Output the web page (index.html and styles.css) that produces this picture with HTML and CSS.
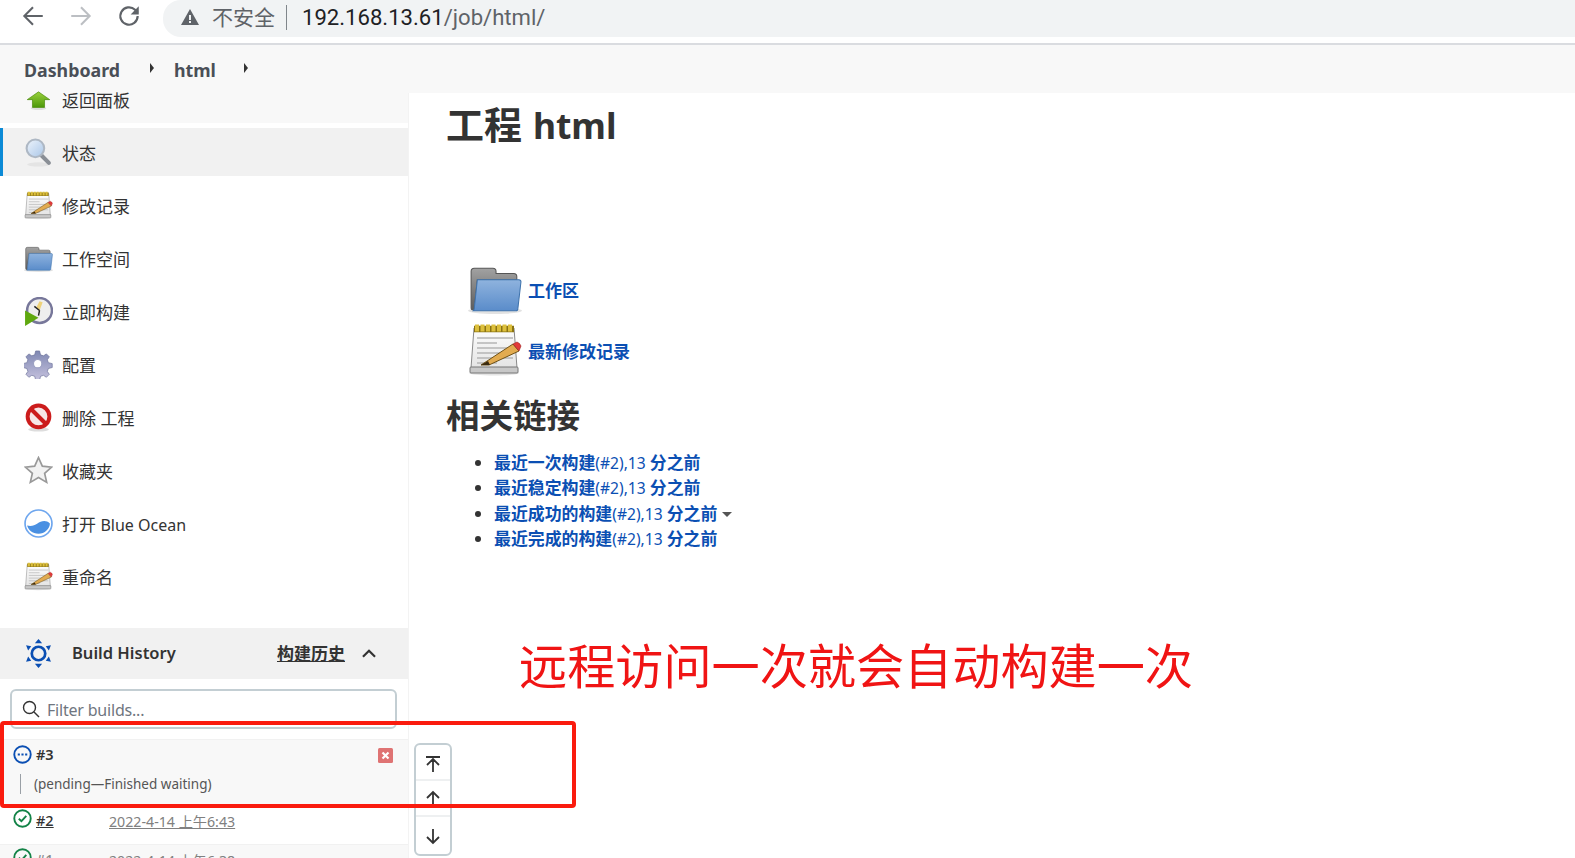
FILE: index.html
```html
<!DOCTYPE html>
<html lang="zh-CN">
<head>
  <meta charset="UTF-8" />
  <title>html [Jenkins]</title>
  <link rel="stylesheet" href="styles.css">
</head>
<body>
  <svg class="defs" width="0" height="0">
    <defs>
      <linearGradient id="folderBlue" x1="0" y1="0" x2="0" y2="1">
        <stop offset="0" stop-color="#8fb3de"/>
        <stop offset="1" stop-color="#5a8cca"/>
      </linearGradient>
      <linearGradient id="folderGrey" x1="0" y1="0" x2="0" y2="1">
        <stop offset="0" stop-color="#a2a2a2"/>
        <stop offset="1" stop-color="#5c5c5c"/>
      </linearGradient>
      <linearGradient id="paper" x1="0" y1="0" x2="0" y2="1">
        <stop offset="0" stop-color="#fdfdfd"/>
        <stop offset="1" stop-color="#e4e4e4"/>
      </linearGradient>
      <linearGradient id="gearFill" x1="0" y1="0" x2="0" y2="1">
        <stop offset="0" stop-color="#7f88b2"/>
        <stop offset="1" stop-color="#c6c2de"/>
      </linearGradient>
      <linearGradient id="lens" x1="0" y1="0" x2="1" y2="1">
        <stop offset="0" stop-color="#eef4fb"/>
        <stop offset="1" stop-color="#a9c6e8"/>
      </linearGradient>
      <linearGradient id="arrowGreen" x1="0" y1="0" x2="0" y2="1">
        <stop offset="0" stop-color="#9ad13c"/>
        <stop offset="1" stop-color="#4c980a"/>
      </linearGradient>
      <symbol id="i-folder" viewBox="0 0 52 50">
        <ellipse cx="26" cy="46" rx="26" ry="3" fill="#e2e2e2"/>
        <path d="M3 8q0-3 3-3h18q3 0 3 3v2h17q3 0 3 3v3H9L6 45H5q-2 0-2-2z" fill="url(#folderGrey)" stroke="#555"/>
        <path d="M9 16h40q2 0 2 2l-3 26q0 2-2 2H5q1-1 1-2z" fill="url(#folderBlue)" stroke="#3f73ad"/>
      </symbol>
      <symbol id="i-notepad" viewBox="0 0 54 52">
        <ellipse cx="26" cy="49" rx="25" ry="2.500" fill="#e4e4e4"/>
        <path d="M3 44l3-40h40l3 40z" fill="url(#paper)" stroke="#8a8a8a"/>
        <rect x="2" y="43" width="48" height="6" rx="1" fill="#c8c8c8" stroke="#777"/>
        <path d="M6 5h40" stroke="#8a7313" stroke-width="6.500"/>
        <path d="M7 4h38" stroke="#dcbf3c" stroke-width="7" stroke-dasharray="4 1.500"/>
        <path d="M9 14h36M9 19h20M9 24h36M9 29h26M9 34h36M9 39h20" stroke="#b5b5b5" stroke-width="1.300"/>
        <path d="M13 41l32-21 6 7-30 14z" fill="#e2ab50" stroke="#6f5218"/>
        <path d="M45 20l4-2q3 1 4 4l-2 5z" fill="#e23a3a" stroke="#9c2020" stroke-width=".6"/>
        <path d="M13 41l7-4 2 4z" fill="#3a2a10"/>
      </symbol>
      <symbol id="i-status-ok" viewBox="0 0 18 18">
        <circle cx="9" cy="9" r="7.800" fill="none" stroke="#138347" stroke-width="1.800"/>
        <path d="M5.500 9.200l2.500 2.400 4.600-5" fill="none" stroke="#138347" stroke-width="1.800"/>
      </symbol>
    </defs>
  </svg>

  <header class="chrome">
    <svg class="nav-icon" viewBox="0 0 24 24"><path d="M21 12H4M12 4l-8 8 8 8" fill="none" stroke="#5f6368" stroke-width="1.900"/></svg>
    <svg class="nav-icon" viewBox="0 0 24 24"><path d="M3 12h17M12 4l8 8-8 8" fill="none" stroke="#bcbfc3" stroke-width="1.900"/></svg>
    <svg class="nav-icon" viewBox="0 0 24 24"><path d="M20 12a8 8 0 1 1-2.400-5.700L20 9" fill="none" stroke="#5f6368" stroke-width="2"/><path d="M21 3v7.500h-7.500z" fill="#5f6368"/></svg>
    <div class="omnibox">
      <svg class="warn" viewBox="0 0 20 20"><path d="M10 2l9 16H1z" fill="#5f6368"/><path d="M9 8h2v5H9zM9 14h2v2H9z" fill="#f1f3f4"/></svg>
      <span class="insecure">不安全</span>
      <span class="url"><b>192.168.13.61</b>/job/html/</span>
    </div>
  </header>

  <nav class="breadcrumbs">
    <a class="crumb">Dashboard</a><span class="crumb-arrow"></span>
    <a class="crumb">html</a><span class="crumb-arrow"></span>
  </nav>

  <div class="layout">
    <aside class="sidebar">
      <a class="task task-back">
        <svg class="task-icon" viewBox="0 0 28 22"><ellipse cx="14" cy="20" rx="9" ry="2" fill="#ddd"/><path d="M14 1l13 9h-6v9H7v-9H1z" fill="url(#arrowGreen)" stroke="#4b8a0a" stroke-width=".8"/></svg>
        返回面板
      </a>
      <a class="task task-active">
        <svg class="task-icon" viewBox="0 0 28 28"><ellipse cx="14" cy="25.500" rx="11" ry="2" fill="#e4e4e4"/><path d="M16 16l8 8" stroke="#8a8f96" stroke-width="4" stroke-linecap="round"/><circle cx="11" cy="10" r="8.500" fill="url(#lens)" stroke="#aeb8c4" stroke-width="2"/></svg>
        状态
      </a>
      <a class="task"><svg class="task-icon"><use href="#i-notepad"/></svg>修改记录</a>
      <a class="task"><svg class="task-icon"><use href="#i-folder"/></svg>工作空间</a>
      <a class="task">
        <svg class="task-icon" viewBox="0 0 28 28"><circle cx="15" cy="13" r="12" fill="#eee" stroke="#77779a" stroke-width="2.400"/><path d="M15 4l-3 6 3 3 3-8z" fill="#eed27a"/><path d="M15 13l-5-4M15 13l-1 5" stroke="#222" stroke-width="1.400"/><path d="M1 13l13 7L1 28z" fill="#5fa80f"/></svg>
        立即构建
      </a>
      <a class="task">
        <svg class="task-icon" viewBox="0 0 28 28"><path d="M12 1h4l1 4 3 1 3-2 3 3-2 3 1 3 4 1v4l-4 1-1 3 2 3-3 3-3-2-3 1-1 4h-4l-1-4-3-1-3 2-3-3 2-3-1-3-4-1v-4l4-1 1-3-2-3 3-3 3 2 3-1z" transform="scale(.94)" fill="url(#gearFill)" stroke="#6c7299" stroke-width=".7"/><circle cx="13.200" cy="13.200" r="4" fill="#fff" stroke="#9a9fc0"/></svg>
        配置
      </a>
      <a class="task">
        <svg class="task-icon" viewBox="0 0 28 28"><ellipse cx="14" cy="25.500" rx="10" ry="2" fill="#ddd"/><circle cx="14" cy="13" r="10.500" fill="#f7e6e6" stroke="#cc1c1c" stroke-width="3.800"/><path d="M7 6l14 14" stroke="#cc1c1c" stroke-width="4"/></svg>
        删除 工程
      </a>
      <a class="task">
        <svg class="task-icon" viewBox="0 0 28 28"><path d="M14 1.500l3.700 8.300 9 .9-6.800 6 2 8.800L14 20.800 6.100 25.500l2-8.800-6.800-6 9-.9z" fill="#f2f2f2" stroke="#999" stroke-width="1.600"/></svg>
        收藏夹
      </a>
      <a class="task">
        <svg class="task-icon" viewBox="0 0 28 28"><circle cx="14" cy="14" r="13" fill="#fff" stroke="#6ea6ee" stroke-width="1.600"/><path d="M3 16c4 1 7 0 10-2s8-4 12 0c0 5-5 10-11 10S4 20 3 16z" fill="#4a90e2"/></svg>
        <span>打开 <span class="latin">Blue Ocean</span></span>
      </a>
      <a class="task"><svg class="task-icon"><use href="#i-notepad"/></svg>重命名</a>

      <section class="history">
        <div class="history-head">
          <svg class="history-icon" viewBox="0 0 28 28"><circle cx="14" cy="14" r="6.500" fill="none" stroke="#0b4fb3" stroke-width="2.600"/><path d="M14 0l3.500 4h-7zM14 28l-3.500-4h7zM2 6l5 1-3 4zM26 6l-5 1 3 4zM2 22l5-1-3-4zM26 22l-5-1 3-4z" fill="#0b4fb3"/></svg>
          <span class="history-title">Build History</span>
          <a class="history-link">构建历史</a>
          <svg class="chevron" viewBox="0 0 14 10"><path d="M1.500 8L7 2.500 12.500 8" fill="none" stroke="#333" stroke-width="2"/></svg>
        </div>
        <div class="filter-wrap">
          <div class="filter">
            <svg class="filter-icon" viewBox="0 0 18 18"><circle cx="7.500" cy="7.500" r="6" fill="none" stroke="#333" stroke-width="1.400"/><path d="M12 12l5 5" stroke="#333" stroke-width="1.400"/></svg>
            <span class="filter-text">Filter builds...</span>
          </div>
        </div>
        <div class="build build-pending">
          <div class="build-top">
            <svg class="status" viewBox="0 0 18 18"><circle cx="9" cy="9" r="7.800" fill="none" stroke="#0b4fb3" stroke-width="1.800"/><path d="M4.500 9h2M8 9h2M11.500 9h2" stroke="#0b4fb3" stroke-width="2"/></svg>
            <b class="build-no">#3</b>
            <svg class="cancel" viewBox="0 0 15 15"><rect width="15" height="15" rx="1.500" fill="#df7373"/><path d="M4.500 4.500l6 6M10.500 4.500l-6 6" stroke="#fff" stroke-width="2.200"/></svg>
          </div>
          <div class="build-note">(pending—Finished waiting)</div>
        </div>
        <div class="build build-row">
          <svg class="status"><use href="#i-status-ok"/></svg>
          <a class="build-no link">#2</a>
          <a class="build-date">2022-4-14 上午6:43</a>
        </div>
        <div class="build build-row build-alt">
          <svg class="status"><use href="#i-status-ok"/></svg>
          <a class="build-no link muted">#1</a>
          <a class="build-date">2022-4-14 上午6:38</a>
        </div>
      </section>
    </aside>

    <main class="content">
      <h1>工程 <span class="h1-latin">html</span></h1>
      <div class="big-links">
        <a class="big-link"><svg class="big-icon"><use href="#i-folder"/></svg>工作区</a>
        <a class="big-link"><svg class="big-icon"><use href="#i-notepad"/></svg>最新修改记录</a>
      </div>
      <h2>相关链接</h2>
      <ul class="permalinks">
        <li><a><b>最近一次构建</b>(#2),13 <b>分之前</b></a></li>
        <li><a><b>最近稳定构建</b>(#2),13 <b>分之前</b></a></li>
        <li><a><b>最近成功的构建</b>(#2),13 <b>分之前</b></a><span class="caret"></span></li>
        <li><a><b>最近完成的构建</b>(#2),13 <b>分之前</b></a></li>
      </ul>
    </main>
  </div>

  <div class="scroll-widget">
    <div class="scroll-btn"><svg viewBox="0 0 18 18"><path d="M2 2h14M9 17V5M3 10l6-6 6 6" fill="none" stroke="#333" stroke-width="1.800"/></svg></div>
    <div class="scroll-btn"><svg viewBox="0 0 18 18"><path d="M9 17V3M3 9l6-6 6 6" fill="none" stroke="#333" stroke-width="1.800"/></svg></div>
    <div class="scroll-btn"><svg viewBox="0 0 18 18"><path d="M9 1v14M3 9l6 6 6-6" fill="none" stroke="#333" stroke-width="1.800"/></svg></div>
  </div>

  <div class="note-text">远程访问一次就会自动构建一次</div>
  <div class="note-box"></div>
</body>
</html>
```

FILE: styles.css
```css
* {
  box-sizing: border-box;
}

html, body {
  height: 858px;
  overflow: hidden;
}

body {
  margin: 0;
  position: relative;
  background: #fff;
  color: #333;
  font-family: "Noto Sans", "Noto Sans CJK SC", sans-serif;
  font-size: 17px;
}

.defs {
  position: absolute;
}

/* browser bar */
.chrome {
  height: 45px;
  border-bottom: 2px solid #dadce0;
  display: flex;
  align-items: flex-start;
  padding-left: 20px;
}

.nav-icon {
  width: 26px;
  height: 26px;
  margin: 3px 22px 0 0;
}

.omnibox {
  flex: 1;
  height: 37px;
  margin-left: -1px;
  padding: 0 0 3px 17px;
  background: #f1f3f4;
  border-radius: 18px 0 0 18px;
  display: flex;
  align-items: center;
}

.warn {
  width: 20px;
  height: 20px;
}

.insecure {
  margin-left: 12px;
  padding-right: 11px;
  border-right: 1px solid #80868b;
  color: #5f6368;
  font-size: 21px;
  line-height: 25px;
}

.url {
  margin-left: 15px;
  font-family: Roboto, sans-serif;
  font-size: 22.100px;
  color: #5f6368;
}

.url b {
  font-weight: 400;
  color: #202124;
}

/* breadcrumbs */
.breadcrumbs {
  height: 48px;
  background: #f8f8f8;
  display: flex;
  align-items: center;
  padding: 2px 0 0 24px;
}

.crumb {
  font-size: 17.800px;
  font-weight: 700;
  color: #4a4f57;
}

.crumb-arrow {
  width: 0;
  height: 0;
  margin: -5px 20px 0 30px;
  border-left: 4px solid #333;
  border-top: 5px solid transparent;
  border-bottom: 5px solid transparent;
}

.crumb-arrow:last-child {
  margin-left: 28px;
}

.layout {
  display: flex;
}

/* sidebar */
.sidebar {
  width: 409px;
  height: 765px;
  border-right: 1px solid #f3f3f3;
  flex: none;
}

.task {
  height: 48px;
  margin-bottom: 5px;
  padding-left: 24px;
  display: flex;
  align-items: center;
  color: #333;
  white-space: nowrap;
}

.latin {
  font-size: 16px;
}

.task-back {
  height: 30px;
  background: #f8f8f8;
  align-items: flex-start;
  line-height: 16px;
}

.task-active {
  background: #f1f1f1;
  border-left: 3px solid #0b8ad6;
  padding-left: 21px;
}

.task-icon {
  width: 29px;
  height: 29px;
  margin-right: 9px;
  flex: none;
}

.task-back .task-icon {
  height: 19px;
  margin-top: -2px;
}

.history {
  margin-top: 28px;
}

.history-head {
  height: 51px;
  background: #f1f1f1;
  padding: 0 0 3px 24px;
  display: flex;
  align-items: center;
}

.history-icon {
  width: 29px;
  height: 29px;
  margin: 2px 19px 0 0;
}

.history-title {
  font-weight: 600;
  font-size: 16.500px;
  flex: 1;
}

.history-link {
  font-weight: 600;
  font-size: 17px;
  text-decoration: underline;
}

.chevron {
  width: 16px;
  height: 11px;
  margin: 2px 31px 0 16px;
}

.filter-wrap {
  padding: 10px 11px 10px 10px;
}

.filter {
  height: 40px;
  border: 2px solid #c3ced3;
  border-radius: 6px;
  display: flex;
  align-items: center;
  padding: 0 0 0 10px;
}

.filter-icon {
  width: 18px;
  height: 18px;
  margin-right: 7px;
}

.filter-text {
  color: #6f7680;
  font-size: 16px;
  letter-spacing: -.2px;
  margin-top: 1px;
}

.build {
  border-top: 1px solid #f1f1f1;
  font-size: 14.500px;
}

.build-pending {
  height: 66px;
  background: #f8f8f8;
  padding: 1px 14px 0 13px;
}

.build-top {
  display: flex;
  align-items: center;
  height: 26px;
}

.status {
  width: 19px;
  height: 19px;
  flex: none;
}

.build-no {
  margin-left: 4px;
  font-weight: 600;
}

.cancel {
  width: 15px;
  height: 15px;
  margin: 3px 1px 0 auto;
}

.build-note {
  margin: 7px 0 0 7px;
  padding-left: 13px;
  border-left: 1px solid #9aa0a6;
  color: #555;
  font-size: 13.500px;
  line-height: 20px;
}

.build-row {
  height: 39px;
  padding: 3px 14px 0 13px;
  display: flex;
  align-items: flex-start;
}

.build-alt {
  background: #f8f8f8;
}

.link {
  font-weight: 500;
  text-decoration: underline;
  width: 73px;
  flex: none;
  margin-top: 1px;
}

.muted {
  color: #888;
}

.build-date {
  color: #808080;
  text-decoration: underline;
  font-size: 14.200px;
  margin-top: 2px;
}

/* main content */
.content {
  padding: 9px 0 0 37px;
}

h1 {
  margin: 0;
  font-size: 38px;
  font-weight: 700;
  line-height: 44px;
}

.h1-latin {
  margin-left: 1px;
  font-size: 35.500px;
}

.big-links {
  margin-top: 118px;
  padding-left: 22px;
}

.big-link {
  height: 48px;
  margin-bottom: 13px;
  display: flex;
  align-items: center;
  color: #0b4fb3;
  font-weight: 700;
}

.big-icon {
  width: 54px;
  height: 52px;
  margin-right: 6px;
  flex: none;
}

h2 {
  margin: 21px 0 0;
  font-size: 33.500px;
  font-weight: 700;
  line-height: 40px;
}

.permalinks {
  margin: 15px 0 0;
  padding-left: 48px;
}

.permalinks li {
  height: 25.300px;
  line-height: 25px;
}

.permalinks a {
  color: #0b4fb3;
  font-size: 15.600px;
}

.permalinks b {
  font-size: 16.900px;
}

.caret {
  display: inline-block;
  width: 0;
  height: 0;
  margin: 0 0 3px 5px;
  border-top: 5px solid #555;
  border-left: 5px solid transparent;
  border-right: 5px solid transparent;
}

/* things that lie over the page */
.scroll-widget {
  position: absolute;
  left: 414px;
  top: 743px;
  width: 38px;
  height: 113px;
  background: #fff;
  border: 2px solid #c3ced3;
  border-radius: 6px;
}

.scroll-btn {
  height: 36px;
  display: flex;
  align-items: center;
  justify-content: center;
  border-bottom: 2px solid #eef0f1;
}

.scroll-btn:first-child, .scroll-btn:last-child {
  padding-top: 3px;
}

.scroll-btn:last-child {
  border-bottom: none;
}

.scroll-btn svg {
  width: 18px;
  height: 18px;
}

.note-text {
  position: absolute;
  left: 519px;
  top: 633px;
  font-size: 48.150px;
  line-height: 66px;
  color: #f01414;
  white-space: nowrap;
}

.note-box {
  position: absolute;
  left: 0;
  top: 721px;
  width: 576px;
  height: 87px;
  border: 4px solid #fa1b0e;
  border-radius: 4px;
}
```
